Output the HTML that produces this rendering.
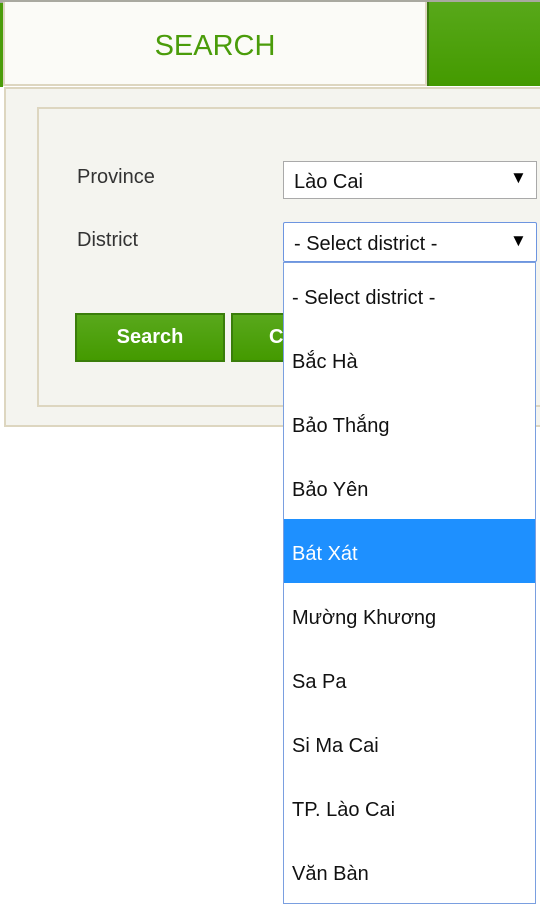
<!DOCTYPE html>
<html><head><meta charset="utf-8"><style>
body{margin:0;width:540px;height:907px;background:#fff;position:relative;overflow:hidden;font-family:"Liberation Sans","DejaVu Sans",sans-serif}
.abs{position:absolute}
</style></head><body>
<div class="abs" style="left:0;top:0;width:540px;height:3px;background:#a9a9a0"></div>
<div class="abs" style="left:0;top:3px;width:3px;height:84px;background:#4a9c0a"></div>
<div class="abs" style="left:3px;top:2px;width:420px;height:82px;background:#fbfbf7;border:2px solid #ddd6c0;border-top:none;"></div>
<div class="abs" style="left:3px;top:30px;width:424px;text-align:center;color:#4a9c0a;font-size:29px;">SEARCH</div>
<div class="abs" style="left:427px;top:2px;width:113px;height:84px;background:linear-gradient(#58a81a,#449a00);border-left:2px solid #3c7a10"></div>
<div class="abs" style="left:4px;top:87px;width:540px;height:336px;background:#f4f4ef;border:2px solid #ddd6c0;"></div>
<div class="abs" style="left:37px;top:107px;width:520px;height:296px;border:2px solid #ddd6c0;"></div>
<div class="abs" style="left:77px;top:166px;font-size:20px;color:#333">Province</div>
<div class="abs" style="left:77px;top:229px;font-size:20px;color:#333">District</div>
<div class="abs" style="left:283px;top:161px;width:252px;height:36px;background:#fff;border:1px solid #a9a9a9;"></div>
<div class="abs" style="left:294px;top:171px;font-size:20px;color:#111">Lào Cai</div>
<div class="abs" style="left:510px;top:168px;font-size:17px;">▼</div>
<div class="abs" style="left:283px;top:222px;width:252px;height:38px;background:#fff;border:1px solid #6d95e0;border-radius:2px"></div>
<div class="abs" style="left:294px;top:233px;font-size:20px;color:#111">- Select district -</div>
<div class="abs" style="left:510px;top:231px;font-size:17px;">▼</div>
<div class="abs" style="left:75px;top:313px;width:146px;height:45px;background:linear-gradient(#59a81c,#449a00);border:2px solid #3a7d0a;color:#fff;font-weight:bold;font-size:20px;text-align:center;line-height:45px">Search</div>
<div class="abs" style="left:231px;top:313px;width:60px;height:45px;background:linear-gradient(#59a81c,#449a00);border:2px solid #3a7d0a;color:#fff;font-weight:bold;font-size:20px;line-height:45px;padding-left:36px;box-sizing:content-box">C</div>
<div class="abs" style="left:283px;top:262px;width:251px;height:640px;background:#fff;border:1px solid #7a9fe0;font-size:20px;color:#111">
<div style="height:64px;line-height:70px;padding-left:8px">- Select district -</div>
<div style="height:64px;line-height:70px;padding-left:8px">Bắc Hà</div>
<div style="height:64px;line-height:70px;padding-left:8px">Bảo Thắng</div>
<div style="height:64px;line-height:70px;padding-left:8px">Bảo Yên</div>
<div style="height:64px;line-height:70px;padding-left:8px;background:#1e90ff;color:#fff">Bát Xát</div>
<div style="height:64px;line-height:70px;padding-left:8px">Mường Khương</div>
<div style="height:64px;line-height:70px;padding-left:8px">Sa Pa</div>
<div style="height:64px;line-height:70px;padding-left:8px">Si Ma Cai</div>
<div style="height:64px;line-height:70px;padding-left:8px">TP. Lào Cai</div>
<div style="height:64px;line-height:70px;padding-left:8px">Văn Bàn</div>
</div>
</body></html>
